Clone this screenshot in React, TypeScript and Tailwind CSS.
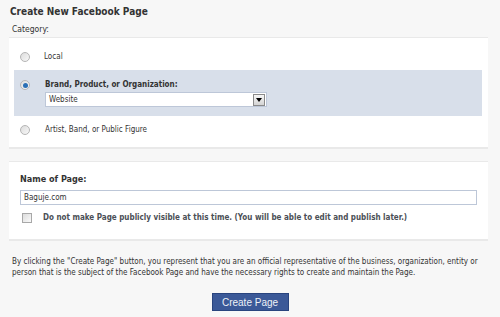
import React from "react";

function Radio({ checked }: { checked?: boolean }) {
  return (
    <span className="w-[10px] h-[10px] rounded-full border border-[#b5b5b5] bg-gradient-to-br from-[#dcdcdc] to-[#f8f8f8] flex items-center justify-center shrink-0">
      {checked && <span className="w-[5px] h-[5px] rounded-full bg-[#2a6fb5]" />}
    </span>
  );
}

export default function App() {
  return (
    <div
      className="w-[500px] h-[317px] bg-[#f7f7f7] text-[#333] overflow-hidden"
      style={{ fontFamily: "'DejaVu Sans Condensed', 'Liberation Sans', sans-serif" }}
    >
      <div className="pl-[10px] pt-[6px] text-[10px] font-bold text-[#333] leading-[12px]">Create New Facebook Page</div>
      <div className="pl-[12px] mt-[6px] text-[8.5px] text-[#333] leading-[10px]">Category:</div>
      <div className="ml-[9px] w-[479px] mt-[3px] bg-white border-t border-b-2 border-[#e9e9e9] pt-[12px] pb-[10px]">
        <div className="flex items-center h-[14px] pl-[11px] text-[8px]">
          <Radio />
          <span className="ml-[14px]">Local</span>
        </div>
        <div className="ml-[5px] mr-[6px] mt-[6px] bg-[#d8dfea] h-[46px] pt-[9px] pl-[6px]">
          <div className="flex items-center h-[12px]">
            <Radio checked />
            <span className="ml-[15px] text-[8px] font-bold">Brand, Product, or Organization:</span>
          </div>
          <div className="ml-[25px] mt-[1px] w-[222px] h-[15px] bg-white border border-[#bdc7d8] flex items-center justify-between pl-[3px] pr-[1px]">
            <span className="text-[8px] leading-[10px]">Website</span>
            <span className="w-[12px] h-[12px] border border-[#8a8a8a] bg-gradient-to-b from-[#f6f6f6] to-[#d4d4d4] flex items-center justify-center">
              <svg width="6" height="4" viewBox="0 0 6 4"><path d="M0 0h6L3 4z" fill="#000" /></svg>
            </span>
          </div>
        </div>
        <div className="flex items-center h-[14px] pl-[11px] mt-[7px] text-[8px]">
          <Radio />
          <span className="ml-[15px]">Artist, Band, or Public Figure</span>
        </div>
      </div>
      <div className="ml-[9px] w-[479px] mt-[12px] bg-white border-t border-b-2 border-[#e9e9e9] pt-[12px] pb-[15px] pl-[11px]">
        <div className="h-[12px] flex items-center text-[9px] font-bold text-[#333]">Name of Page:</div>
        <div className="mt-[4px] w-[457px] h-[15px] border border-[#bdc7d8] bg-white pl-[3px] flex items-center">
          <span className="text-[8px]">Baguje.com</span>
        </div>
        <div className="flex items-center h-[12px] mt-[7px] pl-[2px]">
          <span className="w-[10px] h-[10px] border border-[#a8a8a8] bg-gradient-to-br from-[#dcdcdc] to-[#fafafa] shrink-0" />
          <span className="ml-[11px] text-[8px] font-bold text-[#4b4f56]">Do not make Page publicly visible at this time. (You will be able to edit and publish later.)</span>
        </div>
      </div>
      <div className="pl-[12px] pr-[10px] mt-[15px] text-[8px] leading-[11px] text-[#333]">
        By clicking the "Create Page" button, you represent that you are an official representative of the business, organization, entity or person that is the subject of the Facebook Page and have the necessary rights to create and maintain the Page.
      </div>
      <div className="flex justify-center mt-[15px]">
        <div
          className="w-[77px] h-[18px] bg-[#3b5998] border border-[#29447e] text-[#eef1f7] text-[10px] flex items-center justify-center"
          style={{ fontFamily: "'Liberation Sans', Arial, sans-serif" }}
        >
          Create Page
        </div>
      </div>
    </div>
  );
}
